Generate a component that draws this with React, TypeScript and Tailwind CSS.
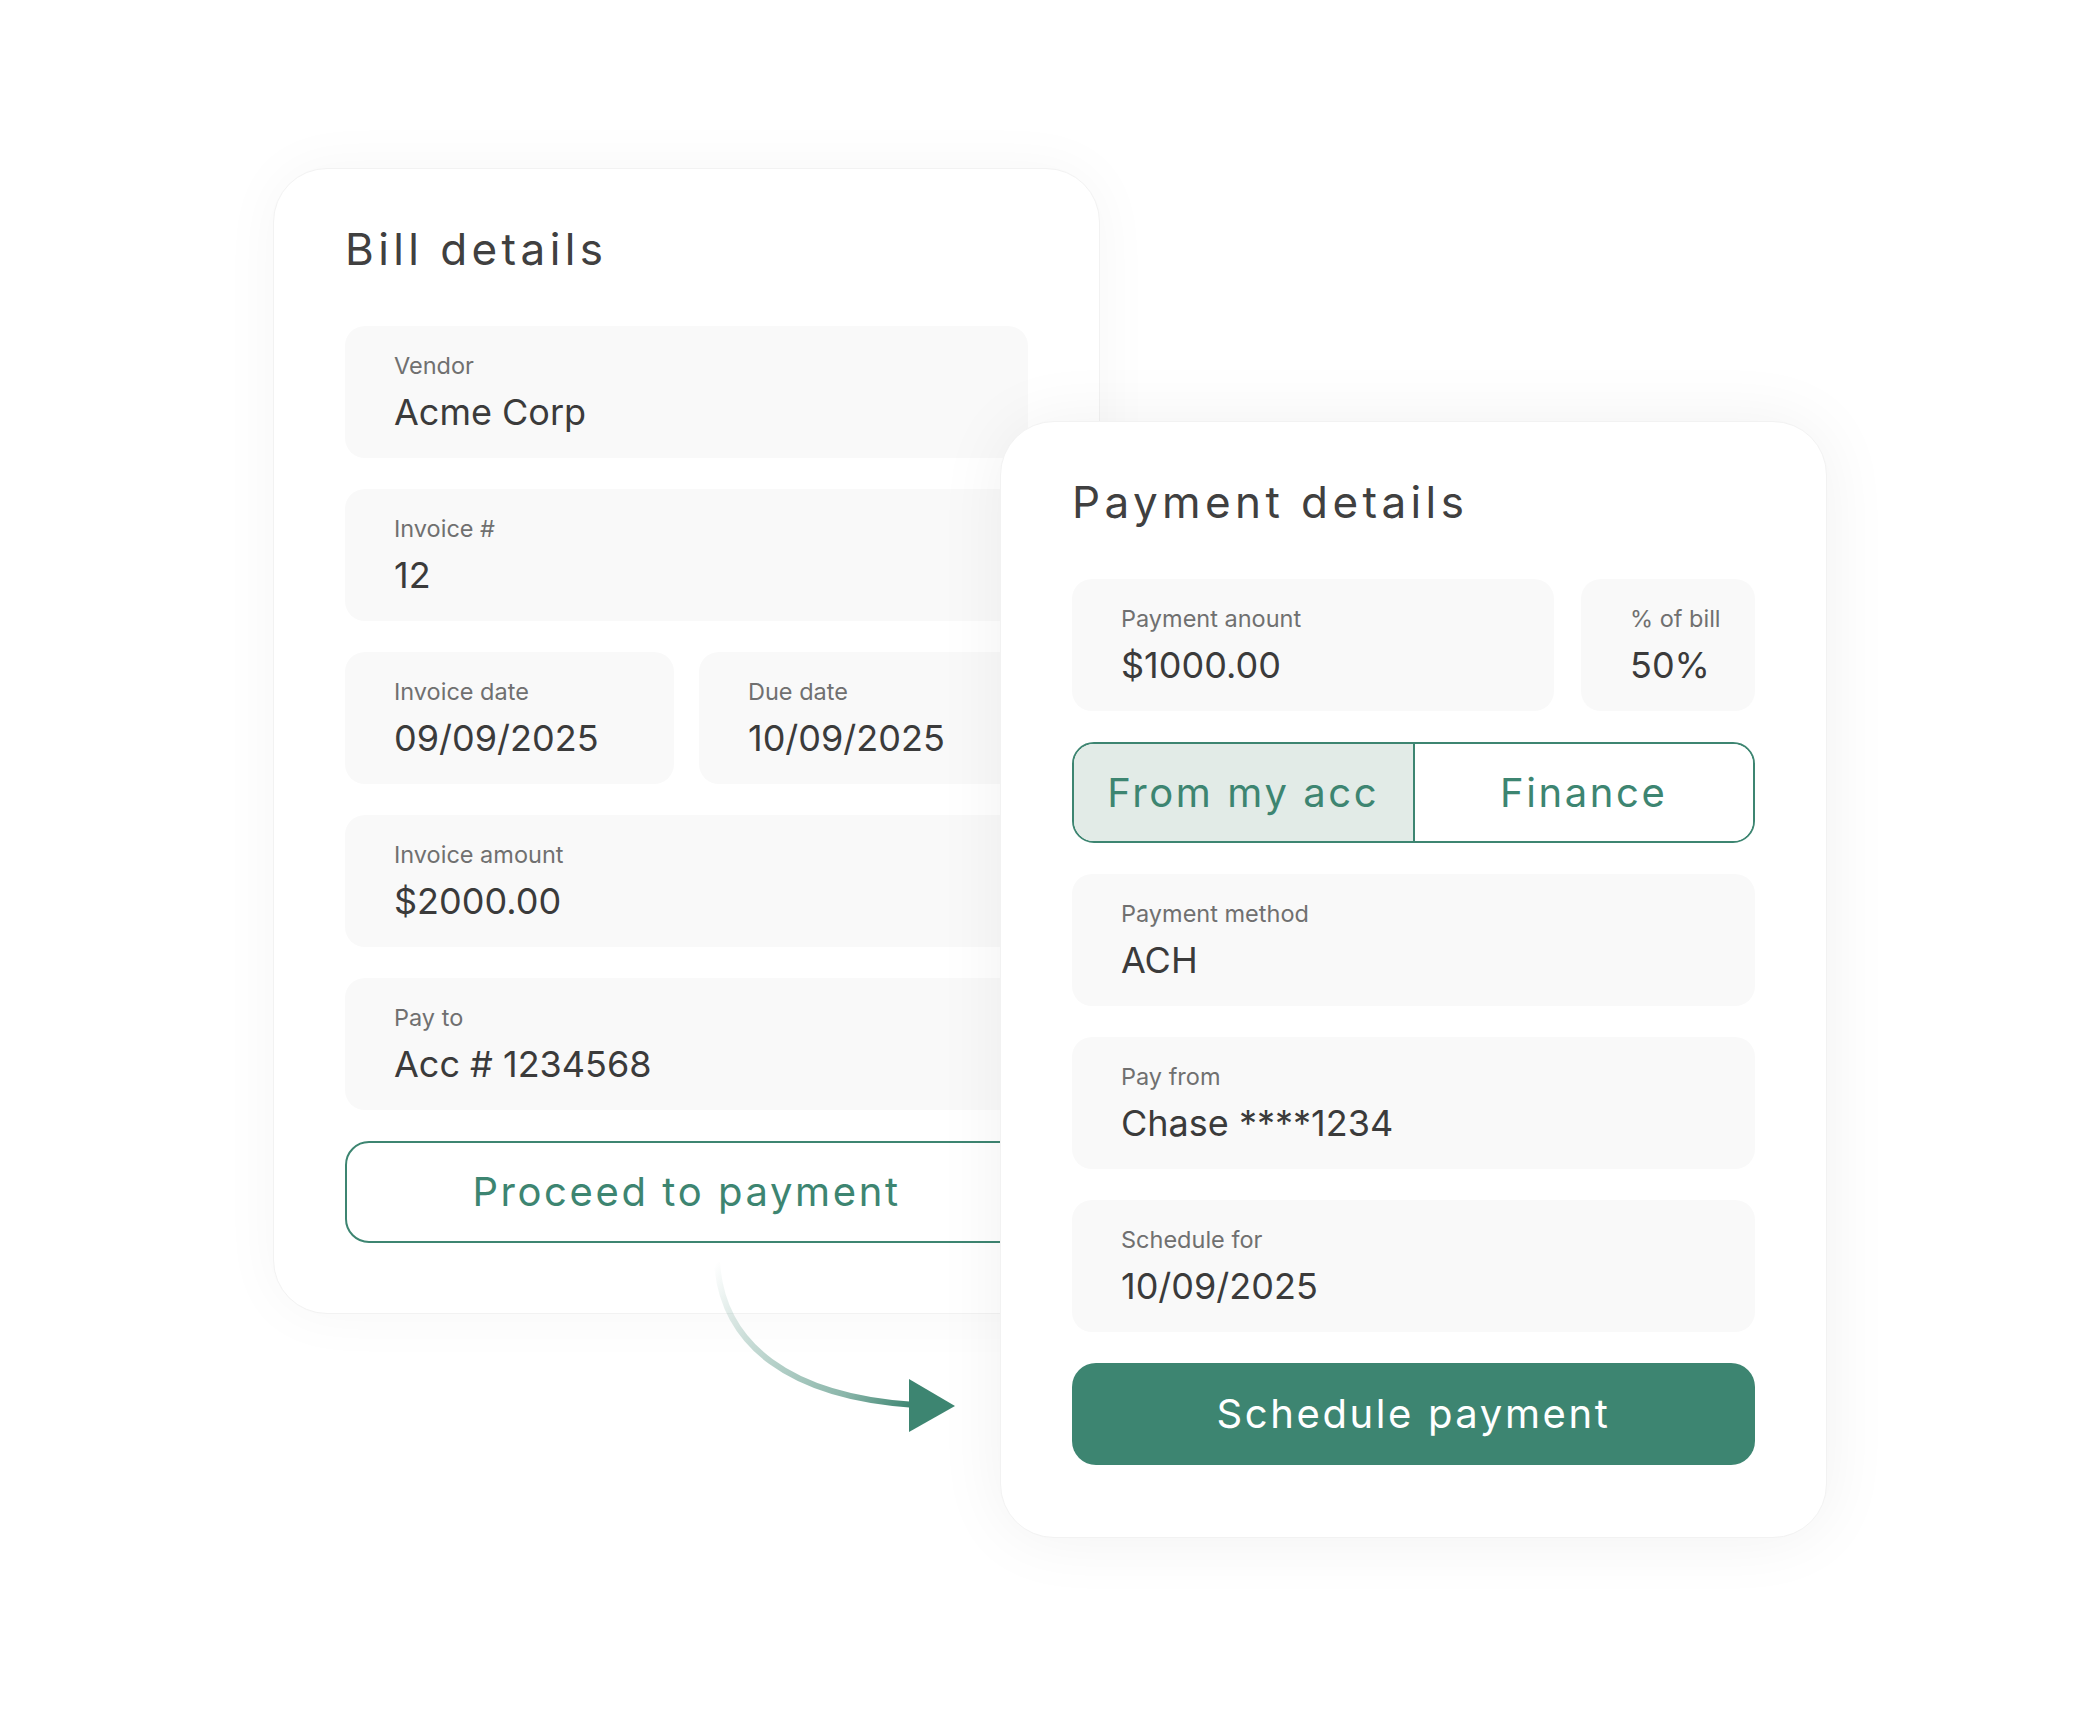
import React from "react";

type FieldProps = { label: string; value: string };

function Field({ label, value }: FieldProps) {
  return (
    <div className="rounded-[20px] bg-[#f9f9f9] pl-[49px] pr-4 pt-[26px] pb-[24px]">
      <div className="text-[23.5px] leading-[28px] text-[#707070]">{label}</div>
      <div className="mt-[10px] text-[36px] leading-[44px] text-[#3b3b3b] whitespace-nowrap">{value}</div>
    </div>
  );
}

function CardTitle({ children }: { children: React.ReactNode }) {
  return (
    <h2 className="text-[44px] leading-[52px] tracking-[0.1em] text-[#404040] font-normal">{children}</h2>
  );
}

function BillCard() {
  return (
    <div className="w-[827px] shrink-0 rounded-[54px] border border-[#f2f2f2] bg-white px-[71px] pt-[54px] pb-[70px] shadow-[0_0_60px_rgba(0,0,0,0.04)]">
      <CardTitle>Bill details</CardTitle>
      <div className="mt-[51px] flex flex-col gap-[31px]">
        <Field label="Vendor" value="Acme Corp" />
        <Field label="Invoice #" value="12" />
        <div className="grid grid-cols-2 gap-[25px]">
          <Field label="Invoice date" value="09/09/2025" />
          <Field label="Due date" value="10/09/2025" />
        </div>
        <Field label="Invoice amount" value="$2000.00" />
        <Field label="Pay to" value="Acc # 1234568" />
        <button className="flex h-[102px] items-center justify-center rounded-[24px] border-[2.5px] border-[#3d8571] bg-white text-[40px] tracking-[0.065em] text-[#3d8571]">
          Proceed to payment
        </button>
      </div>
    </div>
  );
}

function PaymentCard() {
  return (
    <div className="relative ml-[-100px] mt-[253px] w-[827px] shrink-0 rounded-[54px] border border-[#f2f2f2] bg-white px-[71px] pt-[54px] pb-[72px] shadow-[0_0_70px_rgba(0,0,0,0.06)]">
      <CardTitle>Payment details</CardTitle>
      <div className="mt-[51px] flex flex-col gap-[31px]">
        <div className="grid grid-cols-[1fr_174px] gap-[27px]">
          <Field label="Payment anount" value="$1000.00" />
          <Field label="% of bill" value="50%" />
        </div>
        <div className="flex h-[101px] overflow-hidden rounded-[22px] border-[2.5px] border-[#3d8571] text-[40px] tracking-[0.065em] text-[#3d8571]">
          <div className="flex flex-1 items-center justify-center border-r-[2.5px] border-[#3d8571] bg-[#e2ebe7]">
            From my acc
          </div>
          <div className="flex flex-1 items-center justify-center bg-white">Finance</div>
        </div>
        <Field label="Payment method" value="ACH" />
        <Field label="Pay from" value="Chase ****1234" />
        <Field label="Schedule for" value="10/09/2025" />
        <button className="flex h-[102px] items-center justify-center rounded-[24px] bg-[#3d8571] text-[40px] tracking-[0.065em] text-white">
          Schedule payment
        </button>
      </div>
    </div>
  );
}

function FlowArrow() {
  return (
    <svg
      className="pointer-events-none absolute left-[700px] top-[1250px]"
      width="270"
      height="200"
      viewBox="700 1250 270 200"
    >
      <defs>
        <linearGradient id="arrowFade" gradientUnits="userSpaceOnUse" x1="717" y1="1262" x2="912" y2="1405">
          <stop offset="0" stopColor="#3d8571" stopOpacity="0" />
          <stop offset="0.3" stopColor="#3d8571" stopOpacity="0.28" />
          <stop offset="0.75" stopColor="#3d8571" stopOpacity="0.6" />
          <stop offset="1" stopColor="#3d8571" stopOpacity="1" />
        </linearGradient>
      </defs>
      <path
        d="M717 1262 C 722 1345, 790 1397, 915 1405"
        fill="none"
        stroke="url(#arrowFade)"
        strokeWidth="6"
      />
      <polygon points="909,1379 955,1406 909,1432" fill="#3d8571" />
    </svg>
  );
}

export default function App() {
  return (
    <div className="relative min-h-[1710px] w-full overflow-hidden bg-white font-['Inter',sans-serif]">
      <div className="flex items-start pl-[273px] pt-[168px]">
        <BillCard />
        <PaymentCard />
      </div>
      <FlowArrow />
    </div>
  );
}
